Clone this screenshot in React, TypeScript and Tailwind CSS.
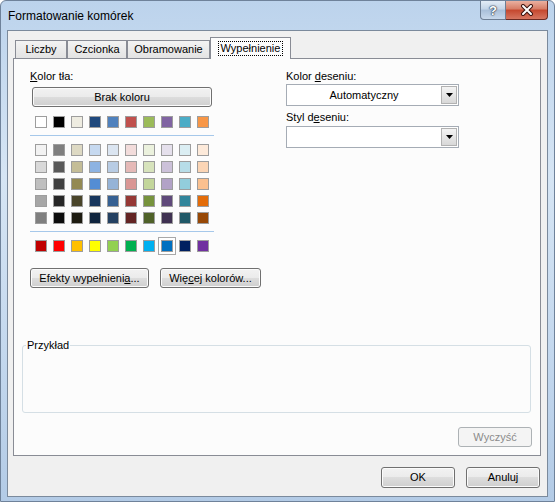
import React from 'react';

const topRow = [
  'bg-[#ffffff]', 'bg-[#000000]', 'bg-[#eeece1]', 'bg-[#1f497d]', 'bg-[#4f81bd]',
  'bg-[#c0504d]', 'bg-[#9bbb59]', 'bg-[#8064a2]', 'bg-[#4bacc6]', 'bg-[#f79646]',
];

const shades = [
  ['bg-[#f2f2f2]', 'bg-[#7f7f7f]', 'bg-[#ddd9c3]', 'bg-[#c6d9f0]', 'bg-[#dbe5f1]', 'bg-[#f2dcdb]', 'bg-[#ebf1dd]', 'bg-[#e5e0ec]', 'bg-[#dbeef3]', 'bg-[#fdeada]'],
  ['bg-[#d9d9d9]', 'bg-[#595959]', 'bg-[#c4bd97]', 'bg-[#8db3e2]', 'bg-[#b8cce4]', 'bg-[#e5b9b7]', 'bg-[#d7e3bc]', 'bg-[#ccc1d9]', 'bg-[#b7dde8]', 'bg-[#fbd5b5]'],
  ['bg-[#bfbfbf]', 'bg-[#404040]', 'bg-[#938953]', 'bg-[#548dd4]', 'bg-[#95b3d7]', 'bg-[#d99694]', 'bg-[#c3d69b]', 'bg-[#b2a2c7]', 'bg-[#92cddc]', 'bg-[#fac08f]'],
  ['bg-[#a6a6a6]', 'bg-[#262626]', 'bg-[#494429]', 'bg-[#17365d]', 'bg-[#366092]', 'bg-[#953734]', 'bg-[#76923c]', 'bg-[#5f497a]', 'bg-[#31859b]', 'bg-[#e36c09]'],
  ['bg-[#7f7f7f]', 'bg-[#0c0c0c]', 'bg-[#1d1b10]', 'bg-[#0f243e]', 'bg-[#244061]', 'bg-[#632423]', 'bg-[#4f6128]', 'bg-[#3f3151]', 'bg-[#205867]', 'bg-[#974806]'],
];

const standard = [
  'bg-[#c00000]', 'bg-[#ff0000]', 'bg-[#ffc000]', 'bg-[#ffff00]', 'bg-[#92d050]',
  'bg-[#00b050]', 'bg-[#00b0f0]', 'bg-[#0070c0]', 'bg-[#002060]', 'bg-[#7030a0]',
];

const btn =
  'flex shrink-0 items-center justify-center whitespace-nowrap rounded-[3px] border border-[#707070] bg-[linear-gradient(#f2f2f2,#ebebeb_50%,#dddddd_50%,#cfcfcf)] shadow-[inset_0_0_0_1px_#fbfbfb]';

function SwatchRow({ colors, selected }: { colors: string[]; selected?: number }) {
  return (
    <div className="flex gap-[6px] pl-[5px]">
      {colors.map((c, i) => (
        <div
          key={i}
          className={`h-[12px] w-[12px] border border-[#9d9d9d] ${c} ${
            i === selected ? 'shadow-[0_0_0_2px_#ffffff,0_0_0_3px_#a8a8a8]' : ''
          }`}
        />
      ))}
    </div>
  );
}

function Dropdown({ value }: { value?: string }) {
  return (
    <div className="flex h-[22px] w-[173px] items-center border border-[#a5acb5] bg-white">
      <span className="flex-1 text-center">{value}</span>
      <div className="mr-px flex h-[18px] w-[16px] items-center justify-center border border-[#b2b2b2] bg-[linear-gradient(#f4f4f4,#e6e6e6_50%,#d8d8d8)]">
        <svg width="7" height="4" viewBox="0 0 7 4">
          <path d="M0 0h7L3.5 4z" fill="#000" />
        </svg>
      </div>
    </div>
  );
}

function Tab({ label, w, active }: { label: string; w: string; active?: boolean }) {
  if (active) {
    return (
      <div className={`relative z-10 -mb-px flex h-[22px] ${w} items-center justify-center border border-b-0 border-[#898c95] bg-[#fcfcfc]`}>
        <span className="border border-dotted border-black px-[2px] leading-[13px]">{label}</span>
      </div>
    );
  }
  return (
    <div className={`flex h-[18px] ${w} items-center justify-center border border-b-0 border-[#898c95] bg-[linear-gradient(#f3f3f3,#e3e3e3)]`}>
      {label}
    </div>
  );
}

export default function App() {
  return (
    <div className="flex h-[502px] w-[555px] flex-col overflow-hidden rounded-t-[6px] border border-[#6f829a] bg-[linear-gradient(180deg,#bcd3ec,#d6e5f4_35%,#c4d8ee_70%,#b3cbe6)] text-[11px] text-black [font-family:'Liberation_Sans',Arial,sans-serif]">
      {/* title bar */}
      <div className="flex h-[29px] items-start justify-between pl-[7px]">
        <span className="pt-[8px] text-[12px] leading-[14px]">Formatowanie komórek</span>
        <div className="mr-[6px] flex">
          <div className="flex h-[19px] w-[26px] items-center justify-center rounded-bl-[4px] border border-t-0 border-[#6d7e94] bg-[linear-gradient(#e3ecf6,#c3d4e7_45%,#a9bfd9_50%,#c8d9ec)]">
            <span className="text-[13px] font-bold leading-none text-white [text-shadow:0_0_1px_#2b3a4d,0_0_1px_#2b3a4d,0_0_2px_#2b3a4d]">?</span>
          </div>
          <div className="flex h-[19px] w-[42px] items-center justify-center rounded-br-[4px] border border-l-0 border-t-0 border-[#6b2a22] bg-[linear-gradient(#eab0a0,#d67c65_45%,#c5472e_50%,#d67661)]">
            <svg width="14" height="12" viewBox="0 0 14 12">
              <path d="M3 2l8 8M11 2l-8 8" stroke="#3b1410" strokeWidth="4" strokeLinecap="round" />
              <path d="M3 2l8 8M11 2l-8 8" stroke="#ffffff" strokeWidth="2" strokeLinecap="round" />
            </svg>
          </div>
        </div>
      </div>

      {/* client area */}
      <div className="ml-[6px] flex h-[467px] w-[541px] flex-col border border-[#7b8a9c] bg-[#f0f0f0]">
        <div className="flex items-end pl-[7px] pt-[6px]">
          <Tab label="Liczby" w="w-[52px]" />
          <Tab label="Czcionka" w="w-[60px]" />
          <Tab label="Obramowanie" w="w-[83px]" />
          <Tab label="Wypełnienie" w="w-[81px]" active />
        </div>

        <div className="ml-[5px] flex h-[398px] w-[528px] flex-col border border-[#898c95] bg-[#fcfcfc]">
          <div className="flex pl-[16px] pt-[11px]">
            {/* left column */}
            <div className="flex w-[184px] flex-col">
              <div className="h-[13px] leading-[13px]">
                <span className="underline">K</span>olor tła:
              </div>
              <div className={`${btn} ml-[2px] mt-[4px] h-[20px] w-[180px]`}>Brak koloru</div>
              <div className="mt-[9px]">
                <SwatchRow colors={topRow} />
              </div>
              <div className="mt-[7px] h-px w-[184px] bg-[#a6c8ea]" />
              <div className="mt-[8px] flex flex-col gap-[5px]">
                {shades.map((row, i) => (
                  <SwatchRow key={i} colors={row} />
                ))}
              </div>
              <div className="mt-[7px] h-px w-[184px] bg-[#a6c8ea]" />
              <div className="mt-[8px]">
                <SwatchRow colors={standard} selected={7} />
              </div>
              <div className="mt-[16px] flex gap-[11px]">
                <div className={`${btn} h-[20px] w-[119px]`}>
                  Efekty wypełnieni<span className="underline">a</span>...
                </div>
                <div className={`${btn} h-[20px] w-[101px]`}>
                  Wię<span className="underline">c</span>ej kolorów...
                </div>
              </div>
            </div>

            {/* right column */}
            <div className="ml-[72px] flex w-[173px] flex-col">
              <div className="h-[13px] leading-[13px]">
                Kolor <span className="underline">d</span>eseniu:
              </div>
              <div className="mt-px">
                <Dropdown value="Automatyczny" />
              </div>
              <div className="mt-[5px] h-[13px] leading-[13px]">
                Styl d<span className="underline">e</span>seniu:
              </div>
              <div className="mt-[2px]">
                <Dropdown />
              </div>
            </div>
          </div>

          <div className="relative ml-[8px] mt-[57px] h-[68px] w-[509px] rounded-[3px] border border-[#d5dfe5]">
            <span className="absolute -top-[7px] left-[3px] bg-[#fcfcfc] px-px leading-[13px]">Przykład</span>
          </div>

          <div className="mr-[8px] mt-[14px] flex h-[20px] w-[74px] items-center justify-center self-end rounded-[3px] border border-[#adb2b5] bg-[#f4f4f4] text-[#8b8b8b]">
            Wyczyść
          </div>
        </div>

        <div className="mr-[7px] mt-[11px] flex justify-end gap-[11px]">
          <div className={`${btn} h-[21px] w-[74px] border-[#3c7fb1] shadow-[inset_0_0_0_1px_#c5e6f8]`}>OK</div>
          <div className={`${btn} h-[21px] w-[74px]`}>Anuluj</div>
        </div>
      </div>
    </div>
  );
}
